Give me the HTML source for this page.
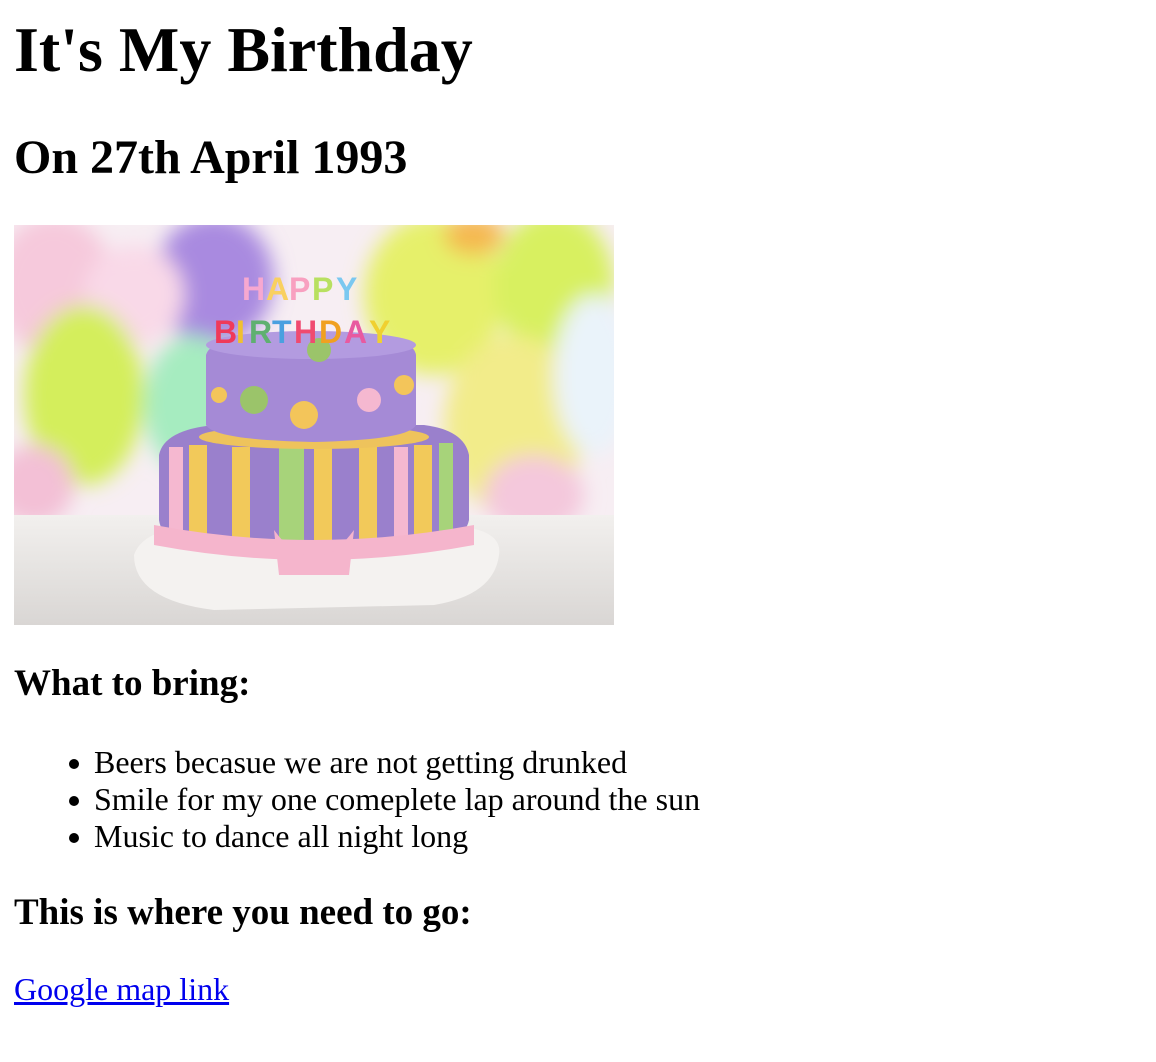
<!DOCTYPE html>
<html><head><meta charset="utf-8"><style>
html,body{margin:0;padding:0;background:#fff;width:1156px;height:1062px;overflow:hidden}
body{font-family:"Liberation Serif","Times New Roman",serif;color:#000;position:relative}
.a{position:absolute;left:14px;white-space:nowrap;margin:0}
h1.a{font-size:64px;line-height:64px;top:18px;font-weight:bold}
h2.a{font-size:48px;line-height:48px;top:134px;font-weight:bold}
h3.a{font-size:37px;line-height:37px;font-weight:bold}
ul.a{font-size:32px;line-height:37px;top:744px;padding:0;list-style:none}
ul li{position:relative;padding-left:80px}
ul li:before{content:"";position:absolute;left:55px;top:15px;width:10px;height:10px;border-radius:50%;background:#000}
a{color:#0000ee;text-decoration:underline}
</style></head><body>
<h1 class="a">It's My Birthday</h1>
<h2 class="a">On 27th April 1993</h2>
<svg class="a" style="top:225px" width="600" height="400" viewBox="0 0 600 400">
<defs>
<filter id="b"><feGaussianBlur stdDeviation="10"/></filter>
<linearGradient id="t" x1="0" y1="0" x2="0" y2="1"><stop offset="0" stop-color="#f2f0ee"/><stop offset="1" stop-color="#d9d6d4"/></linearGradient>
</defs>
<rect width="600" height="400" fill="#f7eef3"/>
<g filter="url(#b)">
<ellipse cx="40" cy="60" rx="60" ry="70" fill="#f6c9dc"/>
<ellipse cx="200" cy="55" rx="60" ry="65" fill="#a98ae0"/>
<ellipse cx="120" cy="70" rx="50" ry="50" fill="#f9d9e8"/>
<ellipse cx="420" cy="70" rx="70" ry="80" fill="#e6f06a"/>
<ellipse cx="540" cy="60" rx="60" ry="75" fill="#d8f060"/>
<ellipse cx="460" cy="10" rx="30" ry="20" fill="#f5b850"/>
<ellipse cx="70" cy="170" rx="60" ry="90" fill="#d4ee5c"/>
<ellipse cx="180" cy="180" rx="50" ry="70" fill="#a6ecc0"/>
<ellipse cx="500" cy="200" rx="70" ry="90" fill="#f2ec8a"/>
<ellipse cx="580" cy="150" rx="40" ry="80" fill="#eaf3fa"/>
<ellipse cx="20" cy="260" rx="40" ry="40" fill="#f3c0d6"/>
<ellipse cx="520" cy="270" rx="50" ry="40" fill="#f4c8dc"/>
</g>
<rect y="290" width="600" height="110" fill="url(#t)"/>
<path d="M120 330 Q130 300 200 300 L420 300 Q490 300 485 330 Q480 370 420 380 L200 385 Q120 375 120 330Z" fill="#f4f2f0"/>
<path d="M145 230 Q150 205 200 200 L410 200 Q450 205 455 230 L455 295 Q450 320 400 322 L200 322 Q148 320 145 295Z" fill="#9a80cc"/>
<g fill="#f2c95a"><rect x="175" y="220" width="18" height="95"/><rect x="218" y="222" width="18" height="98"/><rect x="300" y="222" width="18" height="98"/><rect x="345" y="222" width="18" height="98"/><rect x="400" y="220" width="18" height="95"/></g>
<g fill="#a7d37a"><rect x="265" y="222" width="25" height="98"/><rect x="425" y="218" width="14" height="90"/></g>
<g fill="#f5b8d0"><rect x="155" y="222" width="14" height="90"/><rect x="380" y="222" width="14" height="98"/></g>
<path d="M140 300 Q300 330 460 300 L460 320 Q300 350 140 320Z" fill="#f5b5cc"/>
<path d="M260 305 Q290 345 300 320 Q310 345 340 305 L335 350 L265 350Z" fill="#f5b5cc"/>
<ellipse cx="300" cy="212" rx="115" ry="12" fill="#eec35c"/>
<path d="M192 130 Q196 115 240 112 L360 112 Q400 115 402 130 L402 200 Q395 215 300 217 Q200 215 192 200Z" fill="#a58ad6"/>
<ellipse cx="297" cy="120" rx="105" ry="14" fill="#b39be0"/>
<g fill="#9bc46a"><circle cx="240" cy="175" r="14"/><circle cx="305" cy="125" r="12"/></g>
<g fill="#f3c55a"><circle cx="290" cy="190" r="14"/><circle cx="390" cy="160" r="10"/><circle cx="205" cy="170" r="8"/></g>
<circle cx="355" cy="175" r="12" fill="#f5b8d0"/>
<g font-family="Liberation Sans,sans-serif" font-weight="bold" font-size="32">
<text x="228" y="75" fill="#f7a8d0">H</text><text x="252" y="75" fill="#f9d060">A</text><text x="275" y="75" fill="#f8a0c0">P</text><text x="298" y="75" fill="#b8e060">P</text><text x="322" y="75" fill="#7ac8f0">Y</text>
<text x="200" y="118" fill="#ef3a5a">B</text><text x="222" y="118" fill="#f0c030">I</text><text x="235" y="118" fill="#5fb070">R</text><text x="258" y="118" fill="#4aa0e0">T</text><text x="280" y="118" fill="#f04a70">H</text><text x="305" y="118" fill="#f0a020">D</text><text x="330" y="118" fill="#e85aa0">A</text><text x="355" y="118" fill="#f0d030">Y</text>
</g>
</svg>
<h3 class="a" style="top:665px">What to bring:</h3>
<ul class="a" style="left:14px">
<li>Beers becasue we are not getting drunked</li>
<li>Smile for my one comeplete lap around the sun</li>
<li>Music to dance all night long</li>
</ul>
<h3 class="a" style="top:894px">This is where you need to go:</h3>
<div class="a" style="top:971px;font-size:32px;line-height:37px"><a href="#">Google map link</a></div>
</body></html>
